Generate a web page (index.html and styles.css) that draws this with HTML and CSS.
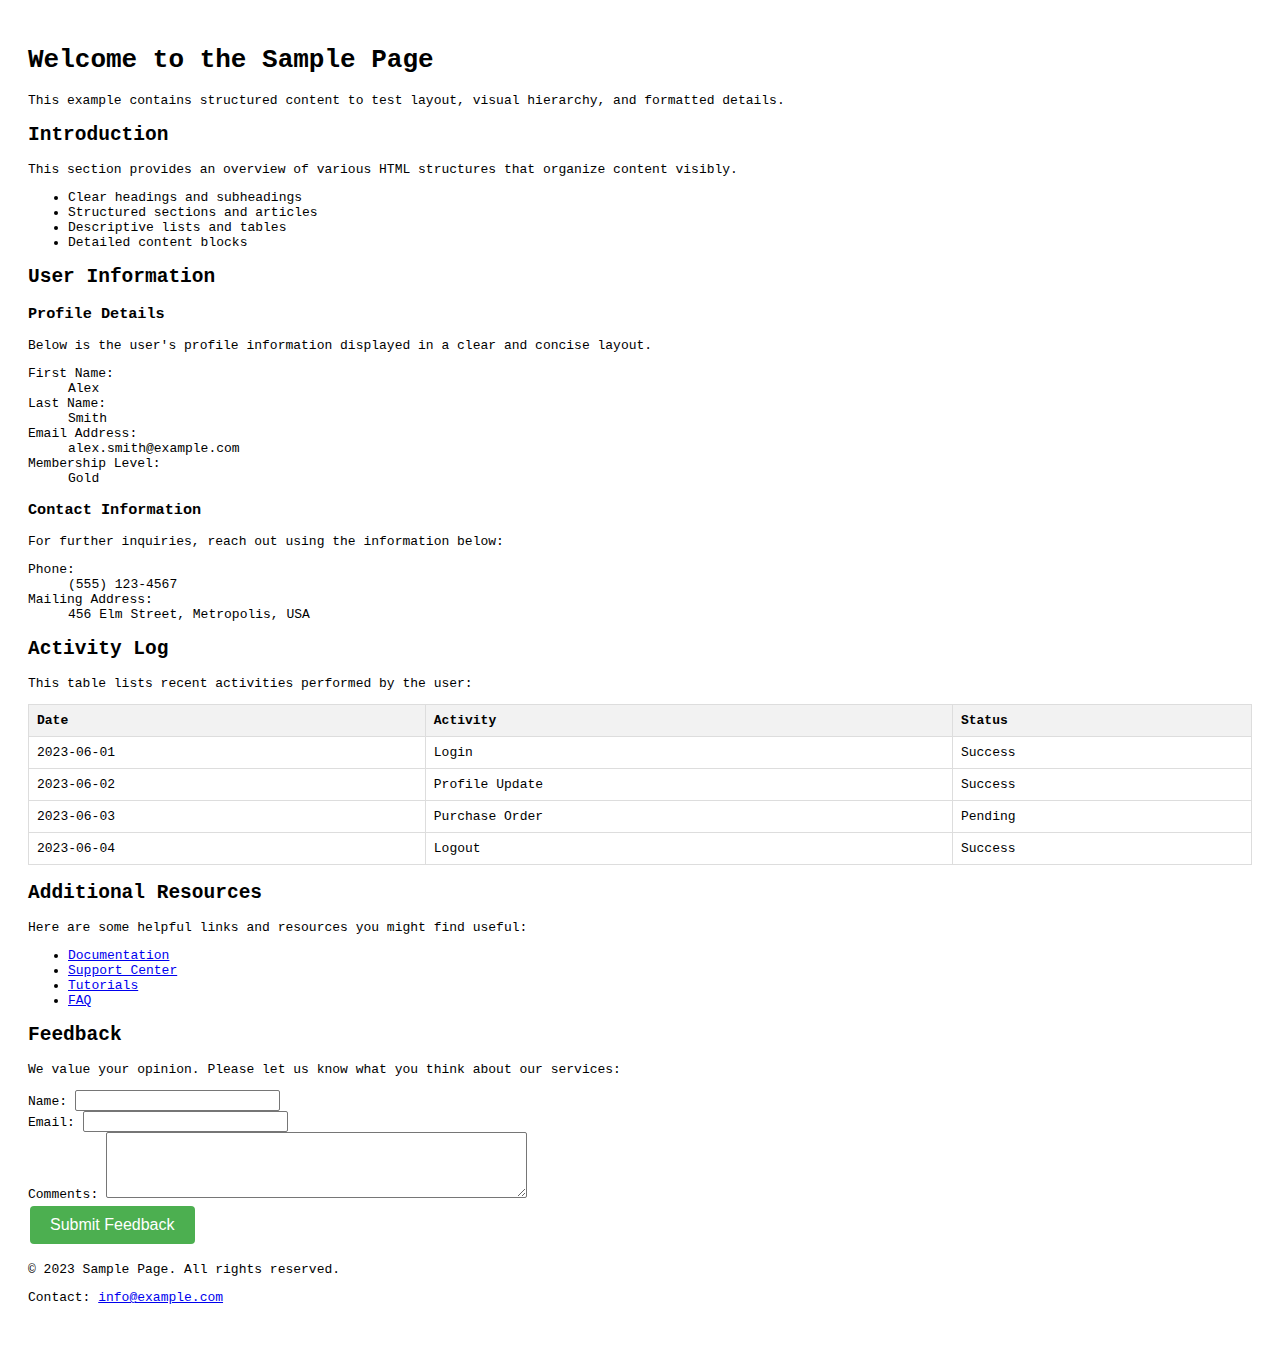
FILE: index.html
```html
<!DOCTYPE html>
<html lang="en">
<head>
<meta charset="utf-8">
<title>Sample Page</title>
<link rel="stylesheet" href="styles.css">
</head>
<body>
<header>
<h1>Welcome to the Sample Page</h1>
<p>This example contains structured content to test layout, visual hierarchy, and formatted details.</p>
</header>
<main>
<section>
<h2>Introduction</h2>
<p>This section provides an overview of various HTML structures that organize content visibly.</p>
<ul>
<li>Clear headings and subheadings</li>
<li>Structured sections and articles</li>
<li>Descriptive lists and tables</li>
<li>Detailed content blocks</li>
</ul>
</section>
<section>
<h2>User Information</h2>
<article>
<h3>Profile Details</h3>
<p>Below is the user's profile information displayed in a clear and concise layout.</p>
<dl>
<dt>First Name:</dt>
<dd>Alex</dd>
<dt>Last Name:</dt>
<dd>Smith</dd>
<dt>Email Address:</dt>
<dd>alex.smith@example.com</dd>
<dt>Membership Level:</dt>
<dd>Gold</dd>
</dl>
</article>
<article>
<h3>Contact Information</h3>
<p>For further inquiries, reach out using the information below:</p>
<dl>
<dt>Phone:</dt>
<dd>(555) 123-4567</dd>
<dt>Mailing Address:</dt>
<dd>456 Elm Street, Metropolis, USA</dd>
</dl>
</article>
</section>
<section>
<h2>Activity Log</h2>
<p>This table lists recent activities performed by the user:</p>
<table class="log">
<thead>
<tr><th>Date</th><th>Activity</th><th>Status</th></tr>
</thead>
<tbody>
<tr><td>2023-06-01</td><td>Login</td><td>Success</td></tr>
<tr><td>2023-06-02</td><td>Profile Update</td><td>Success</td></tr>
<tr><td>2023-06-03</td><td>Purchase Order</td><td>Pending</td></tr>
<tr><td>2023-06-04</td><td>Logout</td><td>Success</td></tr>
</tbody>
</table>
</section>
<section>
<h2>Additional Resources</h2>
<p>Here are some helpful links and resources you might find useful:</p>
<ul>
<li><a href="#">Documentation</a></li>
<li><a href="#">Support Center</a></li>
<li><a href="#">Tutorials</a></li>
<li><a href="#">FAQ</a></li>
</ul>
</section>
<section>
<h2>Feedback</h2>
<p>We value your opinion. Please let us know what you think about our services:</p>
<form class="feedback">
<label for="name">Name:</label>
<input type="text" id="name" class="field"><br>
<label for="email">Email:</label>
<input type="email" id="email" class="field"><br>
<label for="comments">Comments:</label>
<textarea id="comments" class="comments"></textarea><br>
<button type="button" class="submit">Submit Feedback</button>
</form>
</section>
</main>
<footer>
<p>&copy; 2023 Sample Page. All rights reserved.</p>
<p>Contact: <a href="#">info@example.com</a></p>
</footer>
</body>
</html>
```

FILE: styles.css
```css
html {
  background: #fff;
}

body {
  margin: 8px;
  padding: 20px;
  font-family: "Liberation Mono", "Courier New", monospace;
  font-size: 13px;
  color: #000;
}

h1 {
  font-size: 26px;
  margin: 17.4px 0;
}

h2 {
  font-size: 19.5px;
  margin: 16.2px 0;
}

h3 {
  font-size: 15.2px;
  margin: 15.2px 0;
}

p {
  margin: 13px 0;
}

ul {
  margin: 13px 0;
  padding-left: 40px;
}

dl {
  margin: 13px 0;
}

dd {
  margin-left: 40px;
}

a {
  color: #0000ee;
}

.log {
  width: 100%;
  border-collapse: collapse;
  font-size: 13px;
}

.log th,
.log td {
  border: 1px solid #ddd;
  padding: 8px;
  text-align: left;
}

.log th {
  background: #f2f2f2;
  font-weight: bold;
}

.feedback {
  margin: 0;
}

.field {
  width: 205px;
  height: 21px;
  box-sizing: border-box;
  margin: 0;
  padding: 1px 2px;
  border: 1px solid #767676;
  border-radius: 2px;
  font: 13.33px "Liberation Sans", Arial, sans-serif;
}

.comments {
  width: 421px;
  height: 66px;
  box-sizing: border-box;
  margin: 0;
  padding: 2px;
  border: 1px solid #767676;
  border-radius: 2px;
  font: 13.33px "Liberation Mono", monospace;
  vertical-align: baseline;
}

.submit {
  margin: 4px 2px 5px;
  padding: 10px 20px;
  border: none;
  border-radius: 4px;
  background: #4caf50;
  color: #fff;
  font-family: "Liberation Sans", Arial, sans-serif;
  font-size: 16px;
  cursor: pointer;
}
```
